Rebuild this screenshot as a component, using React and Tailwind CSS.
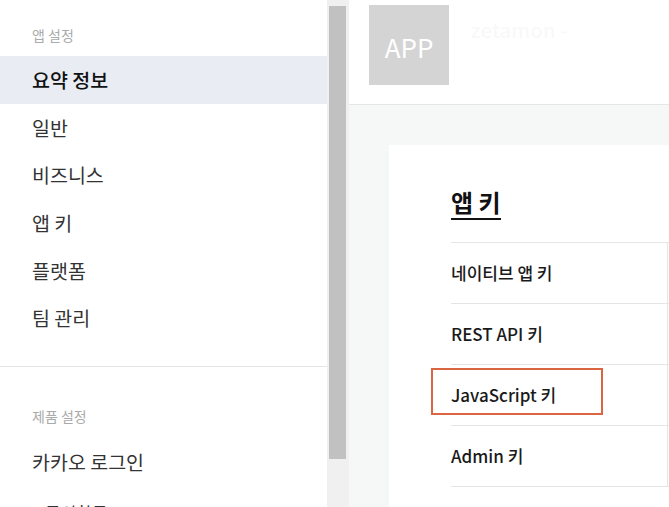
import React from 'react';

const font = { fontFamily: '"Noto Sans CJK KR", "Noto Sans", sans-serif' };

const appMenu = ['요약 정보', '일반', '비즈니스', '앱 키', '플랫폼', '팀 관리'];
const keyRows = ['네이티브 앱 키', 'REST API 키', 'JavaScript 키', 'Admin 키'];

const Sidebar = () => (
  <aside className="w-[327px] shrink-0 h-full overflow-hidden bg-white">
    <div className="pt-[25px] pl-[32px] text-[14px] leading-[20px] text-[#aaaaaa]">앱 설정</div>
    <ul className="mt-[11px]">
      {appMenu.map((item, i) => (
        <li
          key={item}
          className={
            'h-[47.6px] flex items-center pl-[32px] text-[19.5px] ' +
            (i === 0 ? 'bg-[#e9ecf3] text-[#111111] font-medium' : 'text-[#333333]')
          }
        >
          {item}
        </li>
      ))}
    </ul>
    <div className="mt-[24px] border-t border-[#e5e5e5]" />
    <div className="pt-[39px] pl-[32px] text-[14px] leading-[20px] text-[#aaaaaa]">제품 설정</div>
    <ul className="mt-[12px]">
      <li className="h-[47.6px] flex items-center pl-[32px] text-[19.5px] text-[#333333]">카카오 로그인</li>
      <li className="h-[40px] flex items-end pl-[45px] text-[17px] text-[#333333]">동의항목</li>
    </ul>
  </aside>
);

const Scrollbar = () => (
  <div className="w-[22px] shrink-0 h-full bg-[#f0f0f0] pl-[2px] pr-[3px] pt-[6px]">
    <div className="h-[453px] bg-[#c1c1c1]" />
  </div>
);

const KeyTable = () => (
  <div className="mt-[22px] border-t border-[#e5e5e5]">
    {keyRows.map((row, i) => (
      <div key={row} className="relative flex h-[61px] border-b border-[#e5e5e5]">
        <div className="w-[217px] shrink-0 border-r border-[#e5e5e5] flex items-center text-[17px] font-medium text-[#1a1a1a]">
          {row}
        </div>
        <div className="w-[300px]" />
        {i === 2 && (
          <div className="absolute left-[-20px] top-[3px] w-[172px] h-[47px] border-2 border-[#dc6541]" />
        )}
      </div>
    ))}
  </div>
);

export default function App() {
  return (
    <div className="flex w-[669px] h-[507px] overflow-hidden bg-white" style={font}>
      <Sidebar />
      <Scrollbar />
      <main className="flex-1 min-w-0 flex flex-col">
        <header className="h-[105px] shrink-0 bg-white border-b border-[#e6e6e6] flex items-start pl-[20px] pt-[5px]">
          <div className="w-[80px] h-[80px] bg-[#d4d4d4] flex items-center justify-center text-white text-[26px] pt-[3px]">
            APP
          </div>
          <div className="ml-[22px] mt-[10px] text-[20px] text-[#f8f8f8] tracking-wide">zetamon -</div>
        </header>
        <section className="flex-1 bg-[#f6f7f7] pt-[40px] pl-[40px] overflow-hidden">
          <div className="w-[600px] bg-white pt-[40px] pl-[62px] pb-[40px]">
            <h2 className="inline-block text-[24px] leading-[33px] font-bold text-[#111111] border-b-2 border-[#111111]">
              앱 키
            </h2>
            <KeyTable />
          </div>
        </section>
      </main>
    </div>
  );
}
